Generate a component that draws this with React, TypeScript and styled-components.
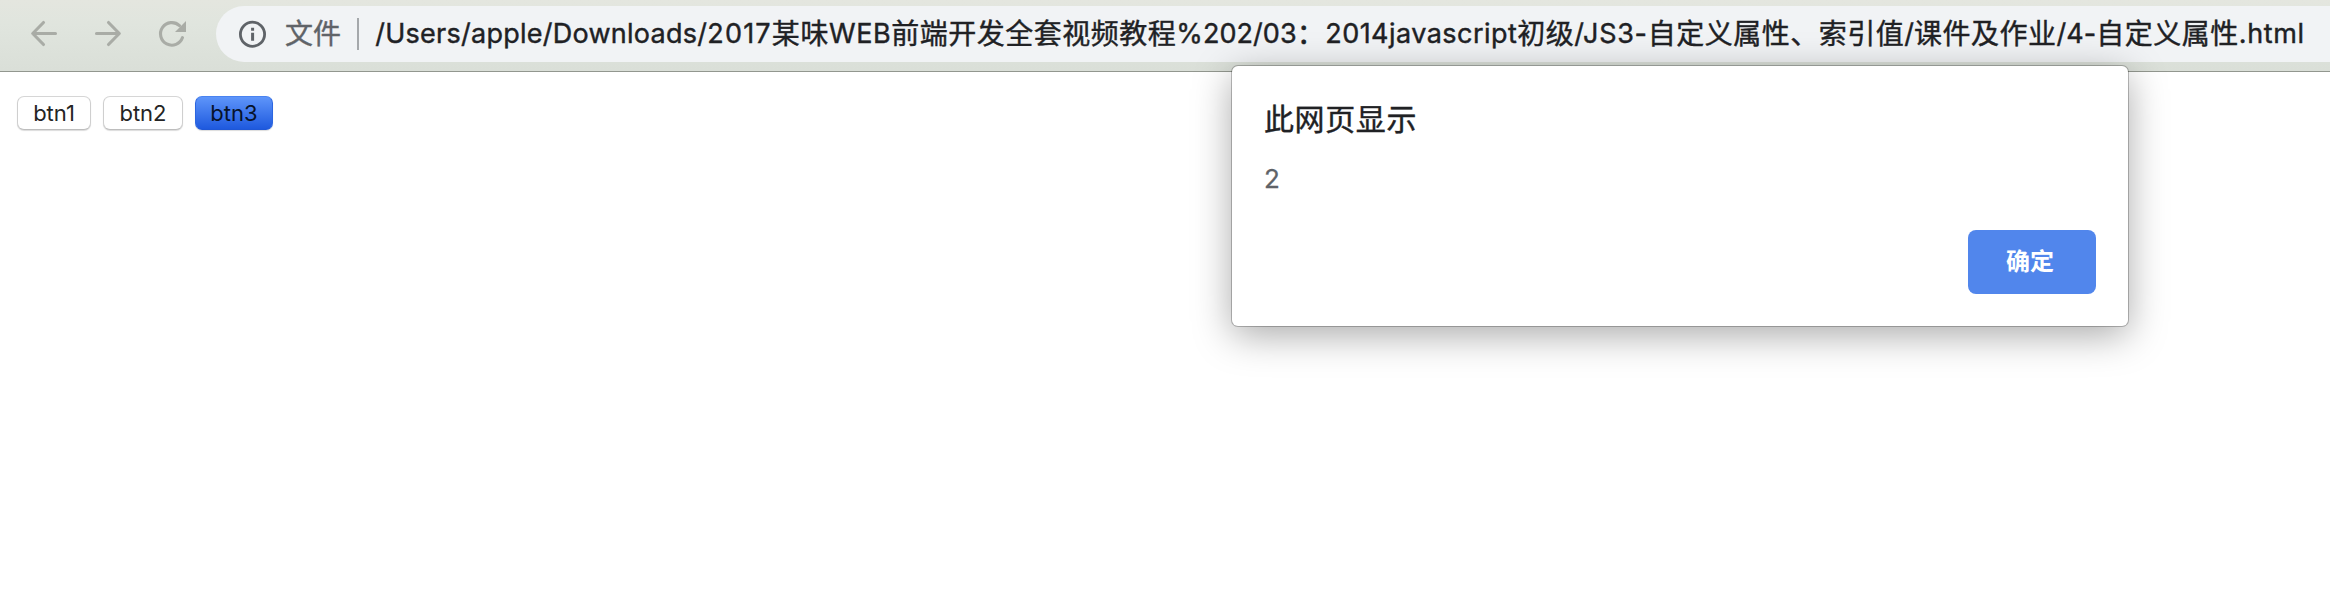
import React from 'react';
import styled, { createGlobalStyle } from 'styled-components';

const latin = `Inter, 'Noto Sans CJK SC', sans-serif`;
const han = `'Noto Sans CJK SC', sans-serif`;

const GlobalStyle = createGlobalStyle`
  * { box-sizing: border-box; }
  body { margin: 0; background: #fff; overflow: hidden; }
`;

const Browser = styled.div`
  position: relative;
  height: 608px;
  overflow: hidden;
  background: #fff;
`;

const Toolbar = styled.header`
  display: flex;
  align-items: flex-start;
  height: 72px;
  padding-top: 6px;
  background: linear-gradient(#e4e6df 0, #e0e5de 24px, #dadfd8 70px);
  border-bottom: 1px solid #92978f;
`;

const NavButtons = styled.nav`
  display: flex;
  gap: 24px;
  width: 216px;
  padding: 8px 0 0 24px;
`;

const NavIcon = styled.svg`
  display: block;
  width: 40px;
  height: 40px;
  fill: none;
  stroke: #a9aca6;
  stroke-width: 3.1;
  stroke-linecap: round;
`;

const AddressBar = styled.div`
  display: flex;
  align-items: center;
  flex: 1;
  height: 56px;
  padding-left: 22px;
  background: #f1f3f5;
  border-radius: 28px 0 0 28px;
  white-space: nowrap;
`;

const InfoIcon = styled.svg`
  display: block;
  width: 29px;
  height: 29px;
  flex: none;
`;

const Scheme = styled.span`
  align-self: flex-start;
  width: 72px;
  margin-left: 18px;
  font: 400 28px/52px ${han};
  color: #5f6368;
  -webkit-text-stroke: 0.4px;
`;

const Divider = styled.span`
  width: 2px;
  height: 32px;
  background: #a5a8ab;
`;

const Url = styled.div`
  display: flex;
  align-items: flex-start;
  align-self: flex-start;
  margin-left: 16.2px;
  color: #202124;
  -webkit-text-stroke: 0.4px;
`;

const UrlRun = styled.span<{ $spacing: number; $han?: boolean }>`
  font-family: ${(p) => (p.$han ? han : latin)};
  font-size: ${(p) => (p.$han ? 28 : 27)}px;
  line-height: ${(p) => (p.$han ? 52 : 56)}px;
  letter-spacing: ${(p) => p.$spacing}px;
`;

const Page = styled.main`
  display: flex;
  gap: 12px;
  padding: 24px 17px;
`;

const PageButton = styled.button<{ $width: number; $active?: boolean }>`
  width: ${(p) => p.$width}px;
  height: 34px;
  padding: 1px 0 0;
  border: 1px solid;
  border-color: ${(p) => (p.$active ? '#4a83f0 #2c66e0 #1f57d6' : '#d6d6d6 #cfcfcf #bdbdbd')};
  border-radius: 7px;
  background: ${(p) => (p.$active ? 'linear-gradient(#5e95fa, #1e59de)' : '#fff')};
  box-shadow: 0 1px 1px rgba(0, 0, 0, 0.14);
  font: 400 22px/31px ${latin};
  color: ${(p) => (p.$active ? '#07132b' : '#242424')};
`;

const Dialog = styled.section`
  position: absolute;
  top: 66px;
  left: 1232px;
  display: flex;
  flex-direction: column;
  width: 896px;
  height: 260px;
  padding: 28px 32px 32px;
  border-radius: 6px;
  background: #fff;
  box-shadow: 0 0 0 1px rgba(0, 0, 0, 0.24), 0 9px 38px rgba(0, 0, 0, 0.34);
`;

const DialogTitle = styled.h1`
  margin: 0;
  font: 400 30px/46px ${han};
  letter-spacing: 0.6px;
  color: #202124;
  -webkit-text-stroke: 0.4px;
`;

const DialogMessage = styled.p`
  margin: 22px 0 0;
  font: 400 26px/34px ${latin};
  color: #5f6368;
  -webkit-text-stroke: 0.3px;
`;

const ConfirmButton = styled.button`
  align-self: flex-end;
  width: 128px;
  height: 64px;
  margin-top: auto;
  padding: 0 4px 4px 0;
  border: 0;
  border-radius: 8px;
  background: #5186ec;
  font: 700 24px/60px ${han};
  color: #fff;
`;

const urlRuns: { text: string; spacing: number; isHan?: boolean }[] = [
  { text: '/Users/apple/Downloads/', spacing: 0.26 },
  { text: '2017', spacing: 1.2 },
  { text: '某味', spacing: 0.6, isHan: true },
  { text: 'WEB', spacing: 0.6 },
  { text: '前端开发全套视频教程', spacing: 0.5, isHan: true },
  { text: '%202/03', spacing: 0.06 },
  { text: '：', spacing: 0.5, isHan: true },
  { text: '2014javascript', spacing: 0.46 },
  { text: '初级', spacing: 0.5, isHan: true },
  { text: '/JS3-', spacing: 0.7 },
  { text: '自定义属性、索引值', spacing: 0.5, isHan: true },
  { text: '/', spacing: 0 },
  { text: '课件及作业', spacing: 0.5, isHan: true },
  { text: '/4-', spacing: 0.1 },
  { text: '自定义属性', spacing: 0.5, isHan: true },
  { text: '.html', spacing: 0.6 },
];

export default function App() {
  return (
    <Browser>
      <GlobalStyle />
      <Toolbar>
        <NavButtons>
          <NavIcon viewBox="0 0 40 40">
            <path d="M31.5 19.5H9M19.5 8.5L8.7 19.5L19.5 30.5" strokeLinejoin="round" />
          </NavIcon>
          <NavIcon viewBox="0 0 40 40">
            <path d="M8.5 19.5H31M20.5 8.5L31.3 19.5L20.5 30.5" strokeLinejoin="round" />
          </NavIcon>
          <NavIcon viewBox="0 0 40 40">
            <path d="M30.5 23.6A11.3 11.3 0 1 1 27.5 11.6" />
            <path d="M34 7V18H23z" fill="#a9aca6" stroke="none" />
          </NavIcon>
        </NavButtons>
        <AddressBar>
          <InfoIcon viewBox="0 0 29 29">
            <circle cx="14.5" cy="14.2" r="12.1" fill="none" stroke="#5f6368" strokeWidth="2.8" />
            <path d="M13.1 7.8h3v3h-3zM13.1 12.8h3v8h-3z" fill="#5f6368" />
          </InfoIcon>
          <Scheme>文件</Scheme>
          <Divider />
          <Url>
            {urlRuns.map((run, i) => (
              <UrlRun key={i} $spacing={run.spacing} $han={run.isHan}>
                {run.text}
              </UrlRun>
            ))}
          </Url>
        </AddressBar>
      </Toolbar>
      <Page>
        <PageButton $width={74}>btn1</PageButton>
        <PageButton $width={80}>btn2</PageButton>
        <PageButton $width={78} $active>
          btn3
        </PageButton>
      </Page>
      <Dialog role="alertdialog">
        <DialogTitle>此网页显示</DialogTitle>
        <DialogMessage>2</DialogMessage>
        <ConfirmButton>确定</ConfirmButton>
      </Dialog>
    </Browser>
  );
}
